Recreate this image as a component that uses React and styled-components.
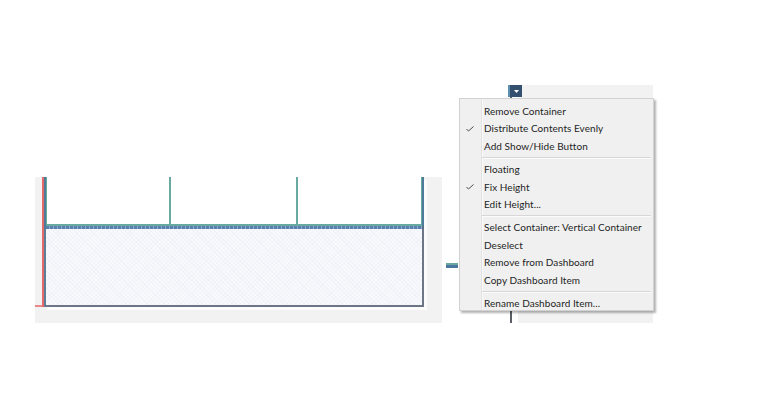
import React from "react";
import styled, { createGlobalStyle } from "styled-components";

const Global = createGlobalStyle`
  html, body { margin: 0; padding: 0; background: #ffffff; }
  body { font-family: Lato, "Liberation Sans", sans-serif; }
`;

const Page = styled.div`
  position: relative;
  width: 759px;
  height: 394px;
  background: #ffffff;
  overflow: hidden;
  display: flex;
  align-items: flex-start;
  padding-top: 85px;
  box-sizing: border-box;
`;

const CanvasPanel = styled.div`
  margin-left: 35px;
  margin-top: 92px;
  width: 407px;
  height: 146px;
  background: #f2f2f2;
  display: flex;
  align-items: flex-start;
  padding-left: 7px;
  box-sizing: border-box;
`;

const RedGuide = styled.div`
  position: relative;
  width: 2px;
  height: 130px;
  background: #e46a6a;
  &::after {
    content: "";
    position: absolute;
    left: -7px;
    bottom: 0;
    width: 7px;
    height: 2px;
    background: #eb8a8a;
  }
`;

const Container = styled.div`
  width: 380px;
  height: 130px;
  display: flex;
  flex-direction: column;
  box-shadow: 3px 3px 0 #fbfbfb;
`;

const TopRow = styled.div`
  display: flex;
  height: 49px;
  border-left: 2px solid #4f7b9a;
  border-right: 2px solid #4f7b9a;
  box-sizing: border-box;
`;

const Cell = styled.div`
  flex: ${(p) => p.$grow};
  background: #ffffff;
  border-bottom: 2px solid #68a9a2;
  border-right: ${(p) => (p.$last ? "1px solid #68a9a2" : "2px solid #68a9a2")};
  border-left: ${(p) => (p.$first ? "1px solid #68a9a2" : "none")};
`;

const DashBand = styled.div`
  height: 3px;
  border-left: 2px solid #4f7b9a;
  border-right: 2px solid #5a6f86;
  background: repeating-linear-gradient(90deg, #5a80ad 0 3px, #8ea9c9 3px 4px);
`;

const HatchArea = styled.div`
  flex: 1;
  border-left: 2px solid #5e7d99;
  border-right: 2px solid #6c7686;
  border-bottom: 2px solid #6c7686;
  background:
    repeating-linear-gradient(45deg, rgba(232, 237, 245, 0.5) 0 1px, transparent 1px 3px),
    repeating-linear-gradient(-45deg, rgba(236, 240, 247, 0.4) 0 1px, transparent 1px 3px),
    #f8f9fc;
`;

const Marker = styled.div`
  margin-left: 4px;
  margin-top: 178px;
  width: 12px;
  height: 5px;
  border-top: 2px solid #6aa7a0;
  background: #4a76a0;
  box-sizing: border-box;
`;

const Zone = styled.div`
  position: relative;
  margin-left: 50px;
  width: 145px;
  height: 238px;
  display: flex;
`;

const ZoneEdge = styled.div`
  margin-left: 2px;
  width: 2px;
  background: #5b5f66;
`;

const ZoneBody = styled.div`
  margin-left: 6px;
  flex: 1;
  background: #f2f2f2;
`;

const DropButton = styled.div`
  position: absolute;
  left: 0;
  top: 0;
  width: 14px;
  height: 12px;
  background: #34506f;
  border-left: 2px solid #5c8fb0;
  box-sizing: border-box;
  display: flex;
  align-items: center;
  justify-content: center;
`;

const Menu = styled.div`
  position: absolute;
  left: 459px;
  top: 98px;
  width: 195px;
  height: 213px;
  box-sizing: border-box;
  background: #f0f0f0;
  border: 1px solid #d2d2d2;
  box-shadow: 2px 2px 2px rgba(0, 0, 0, 0.3);
  padding: 3px 0 1px;
  font-family: Lato, "Liberation Sans", sans-serif;
  font-size: 10px;
  font-weight: 400;
  color: #1e1e1e;
  &::before {
    content: "";
    position: absolute;
    left: 21px;
    top: 0;
    bottom: 0;
    width: 1px;
    background: #e2e2e2;
    border-right: 1px solid #fafafa;
  }
`;

const Item = styled.div`
  position: relative;
  height: 17.6px;
  display: flex;
  align-items: center;
  padding-left: 24px;
  white-space: nowrap;
  letter-spacing: 0.05px;
`;

const Check = styled.svg`
  position: absolute;
  left: 6px;
  top: 6px;
`;

const Separator = styled.div`
  position: relative;
  height: 5.4px;
  &::after {
    content: "";
    position: absolute;
    left: 22px;
    right: 2px;
    top: 2px;
    height: 1px;
    background: #d7d7d7;
    border-bottom: 1px solid #fbfbfb;
  }
`;

const groups = [
  [
    { label: "Remove Container" },
    { label: "Distribute Contents Evenly", checked: true },
    { label: "Add Show/Hide Button" },
  ],
  [
    { label: "Floating" },
    { label: "Fix Height", checked: true },
    { label: "Edit Height..." },
  ],
  [
    { label: "Select Container: Vertical Container" },
    { label: "Deselect" },
    { label: "Remove from Dashboard" },
    { label: "Copy Dashboard Item" },
  ],
  [{ label: "Rename Dashboard Item..." }],
];

export default function App() {
  return (
    <>
      <Global />
      <Page>
        <CanvasPanel>
          <RedGuide />
          <Container>
            <TopRow>
              <Cell $grow={124} $first />
              <Cell $grow={127} />
              <Cell $grow={125} $last />
            </TopRow>
            <DashBand />
            <HatchArea />
          </Container>
        </CanvasPanel>
        <Marker />
        <Zone>
          <ZoneEdge />
          <ZoneBody />
          <DropButton>
            <svg width="5" height="3" viewBox="0 0 5 3">
              <polygon points="0,0 5,0 2.5,3" fill="#ffffff" />
            </svg>
          </DropButton>
        </Zone>
        <Menu>
          {groups.map((g, gi) => (
            <React.Fragment key={gi}>
              {gi > 0 && <Separator />}
              {g.map((it) => (
                <Item key={it.label}>
                  {it.checked && (
                    <Check width="8" height="6" viewBox="0 0 8 6">
                      <polyline points="0.5,3 2.5,5 7.5,0.5" fill="none" stroke="#4a4a4a" strokeWidth="1" />
                    </Check>
                  )}
                  {it.label}
                </Item>
              ))}
            </React.Fragment>
          ))}
        </Menu>
      </Page>
    </>
  );
}
